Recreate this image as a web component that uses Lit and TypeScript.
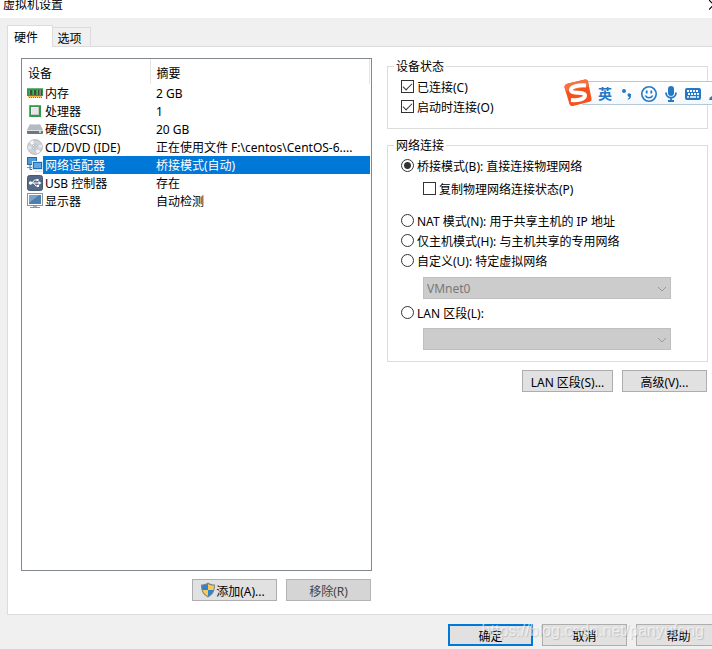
import { LitElement, html, css, svg, type TemplateResult } from "lit";
import { customElement, state } from "lit/decorators.js";
import { classMap } from "lit/directives/class-map.js";

interface Device {
  id: string;
  name: string;
  summary: string;
}

const DEVICES: Device[] = [
  { id: "memory", name: "内存", summary: "2 GB" },
  { id: "cpu", name: "处理器", summary: "1" },
  { id: "disk", name: "硬盘(SCSI)", summary: "20 GB" },
  { id: "cd", name: "CD/DVD (IDE)", summary: "正在使用文件 F:\\centos\\CentOS-6...." },
  { id: "network", name: "网络适配器", summary: "桥接模式(自动)" },
  { id: "usb", name: "USB 控制器", summary: "存在" },
  { id: "display", name: "显示器", summary: "自动检测" },
];

const ICONS: Record<string, TemplateResult> = {
  memory: svg`
    <path d="M0 3h16v8h-1v2H1v-2H0z" fill="#2f9a4a"/>
    <rect x="0" y="3" width="16" height="1" fill="#5fb873"/>
    <path d="M2 5h3v5H2zM6 5h3v5H6zM10 5h2v5h-2zM13 5h2v5h-2z" fill="#4a4640"/>
    <path d="M2 5h1v5H2zM6 5h1v5H6zM10 5h1v5h-1zM13 5h1v5h-1z" fill="#8b8880"/>
    <path d="M1 11h14v1H1z" fill="#f5b94c"/><path d="M1 12.500h14" stroke="#f9d58c" stroke-dasharray="1 1"/>`,
  cpu: svg`
    <rect x="2" y="2" width="12" height="12" fill="#2f9a4a"/>
    <path d="M2 2h12v1H3v11H2z" fill="#55b56d"/>
    <rect x="4" y="4" width="8" height="8" rx="1" fill="#e6e6e6"/>
    <path d="M4.500 11V4.500H11" fill="none" stroke="#fff"/>
    <path d="M5 11.500h6.500V5" fill="none" stroke="#c4c8c6"/>`,
  disk: svg`
    <path d="M3 3h10l3 6H0z" fill="#b4bac2"/>
    <path d="M3.500 3.500h9" stroke="#d6dade"/>
    <path d="M0 9h16v3q0 1-1 1H1q-1 0-1-1z" fill="#6f7680"/>
    <path d="M0 9.500h16" stroke="#dfe3e6"/><rect x="12" y="10" width="2" height="2" fill="#a5ea94"/>`,
  cd: svg`
    <circle cx="8" cy="8" r="7.400" fill="#cfd3d9" stroke="#a9adb3" stroke-width="0.800"/>
    <path d="M8 8 2.500 3.500A7 7 0 0 1 6 1.300zM8 8l5.500 4.500a7 7 0 0 1-3.500 2.200z" fill="#f4f6f8"/>
    <path d="M8 8l6.500-2.500a7 7 0 0 1 .3 3.500zM8 8 1.500 10.500A7 7 0 0 1 1.200 7z" fill="#e6e9ee"/>
    <circle cx="8" cy="8" r="3" fill="#e9ecf0" stroke="#b0b5bc" stroke-width="0.800"/><circle cx="8" cy="8" r="1.300" fill="#fff" stroke="#8b949c" stroke-width="0.800"/>`,
  network: svg`
    <rect x="0.500" y="0.500" width="9" height="7" fill="#4f9bd6" stroke="#1f6cb0"/>
    <path d="M3 8v4.500h4" fill="none" stroke="#1f6cb0"/>
    <path d="M0 10.500h6" stroke="#4f9bd6"/>
    <rect x="5.500" y="4.500" width="10" height="8" fill="#5ea9e0" stroke="#cfe6f7"/>
    <rect x="6.500" y="5.500" width="8" height="6" fill="#5ea9e0" stroke="#1f6cb0"/>
    <path d="M8 14.500h7" stroke="#cfe6f7"/>`,
  usb: svg`
    <rect x="0.500" y="0.500" width="15" height="15" rx="2" fill="#536a86" stroke="#465a73"/>
    <path d="M3 8h9M5 8l2.500-3H10M6.500 8 9 11h1.500" fill="none" stroke="#fff"/>
    <circle cx="3.500" cy="8" r="1.700" fill="#fff"/><path d="M11.500 6 14.500 8l-3 2zM9.500 4h2v2h-2zM10 10h2v2h-2z" fill="#fff"/>`,
  display: svg`
    <rect x="0.500" y="0.500" width="15" height="12" fill="#fff" stroke="#8593a1"/>
    <rect x="2" y="2" width="12" height="9" fill="#4d7fae"/>
    <path d="M2 2h10L2 10z" fill="#7ba3c8"/>
    <path d="M6 13h4v1H6z" fill="#a2adb8"/><path d="M3 14.500h10" stroke="#8593a1"/>`,
};

@customElement("app-root")
export class AppRoot extends LitElement {
  @state() private selected = "network";
  @state() private mode = "bridge";

  static styles = css`
    :host {
      display: flex;
      flex-direction: column;
      min-height: 100vh;
      overflow: hidden;
      position: relative;
      background: #f0f0f0;
      color: #000;
      font: 12px/18px "Noto Sans", "Noto Sans CJK SC", sans-serif;
    }
    * { box-sizing: border-box; }
    svg { display: block; flex: none; }

    .titlebar {
      display: flex;
      justify-content: space-between;
      height: 18px;
      padding-left: 3px;
      background: #fff;
    }
    .title { margin: 0; font-size: 12px; font-weight: 400; line-height: 10px; }
    .close {
      width: 3px;
      height: 10px;
      padding: 0;
      border: 0;
      background: none;
      overflow: hidden;
    }

    .tabs { display: flex; align-items: flex-end; height: 28px; padding-left: 7px; }
    .tab {
      height: 19px;
      width: 38px;
      padding: 2px 4px 0 0;
      border: 1px solid #dcdcdc;
      border-left: 0;
      border-bottom: 0;
      background: #f0f0f0;
      font: inherit;
      color: inherit;
    }
    .tab.active {
      position: relative;
      z-index: 1;
      width: 46px;
      height: 22px;
      margin-bottom: -1px;
      padding: 2px 8px 0 0;
      border-left: 1px solid #dcdcdc;
      background: #fff;
    }

    .panel {
      flex: 1;
      display: grid;
      grid-template-columns: minmax(0, 351fr) minmax(0, 321fr);
      gap: 15px;
      margin-left: 7px;
      padding: 11px 4px 13px 13px;
      border: 1px solid #dcdcdc;
      border-right: 0;
      background: #fff;
    }
    .left { display: flex; flex-direction: column; }
    .list { flex: 1; border: 1px solid #828790; padding-right: 1px; }
    table { width: 100%; border-collapse: collapse; table-layout: fixed; }
    th, td { padding: 0; text-align: left; font-weight: 400; white-space: nowrap; }
    thead tr { height: 25px; }
    th { padding: 5px 6px 0; border-right: 1px solid #e5e5e5; }
    .col-name { width: 128px; }
    tbody tr { height: 18px; line-height: 16px; }
    .device { display: flex; align-items: center; padding-left: 5px; }
    .name { flex: 1; height: 18px; padding: 2px 0 0 2px; }
    .summary { padding: 2px 0 0 6px; overflow: hidden; }
    .selected .name, .selected .summary { background: #0078d7; color: #fff; }

    .actions { display: flex; justify-content: flex-end; gap: 9px; padding: 8px 1px 0 0; }
    .btn {
      display: flex;
      align-items: center;
      justify-content: center;
      width: 85px;
      height: 22px;
      padding: 3px 0 0;
      border: 1px solid #adadad;
      background: #e1e1e1;
      font: inherit;
      color: #000;
      white-space: nowrap;
    }
    .btn svg { margin: -3px 0 0 -4px; }
    .btn.wide { width: 91px; }
    .btn:disabled { background: #d5d5d5; border-color: #b4b4b4; color: #444; }
    .btn.primary { border: 2px solid #0078d7; }

    fieldset {
      min-width: 0;
      margin: 0 0 8px;
      padding: 2px 13px 12px;
      border: 1px solid #dcdcdc;
    }
    .network { margin-bottom: 0; padding-bottom: 11px; }
    legend { height: 16px; margin-left: -7px; padding: 0 2px; line-height: 18px; }
    .row { display: flex; align-items: center; gap: 3px; height: 20px; white-space: nowrap; }
    .row span { padding-top: 4px; }
    .row.nested { margin: 3px 0 12px 22px; }
    .row.spaced { margin-top: 3px; }
    input {
      appearance: none;
      flex: none;
      width: 13px;
      height: 13px;
      margin: 0;
      border: 1px solid #333;
      background: #fff;
    }
    input[type="radio"] { border-radius: 50%; }
    input[type="radio"]:checked {
      background: radial-gradient(circle, #333 0 3px, #fff 4px);
    }
    input[type="checkbox"]:checked::after {
      content: "";
      display: block;
      width: 8px;
      height: 4px;
      margin: 2px 0 0 1px;
      border: solid #333;
      border-width: 0 0 1px 1px;
      transform: rotate(-45deg);
    }
    .combo { position: relative; display: flex; margin: 7px 23px 0 22px; }
    .spaced + .combo { margin-top: 6px; }
    select {
      appearance: none;
      width: 100%;
      height: 22px;
      padding: 1px 3px 0;
      border: 1px solid #bfbfbf;
      border-radius: 0;
      background: #ccc;
      font: inherit;
      color: #787878;
      opacity: 1;
    }
    .arrow { position: absolute; right: 4px; top: 9px; pointer-events: none; }

    .footer { display: flex; justify-content: flex-end; gap: 9px; height: 34px; padding-top: 9px; margin-right: -9px; }
    .watermark {
      position: absolute;
      right: 8px;
      bottom: 8px;
      font: 16px/20px "Liberation Sans", sans-serif;
      color: rgba(255, 255, 255, 0.6);
      text-shadow: 1px 1px 1px rgba(0, 0, 0, 0.15);
      pointer-events: none;
    }

    .ime { position: absolute; right: 0; top: 79px; display: flex; align-items: center; height: 28px; }
    .ime-bar {
      display: flex;
      align-items: center;
      gap: 8px;
      height: 24px;
      margin-left: -10px;
      padding-left: 16px;
      border: solid #b4c8d8;
      border-width: 1px 0;
      background: linear-gradient(#fff, #f5f8fb);
      color: #2478c6;
    }
    .ime-bar svg { margin-top: 2px; }
    .ime-logo { position: relative; z-index: 1; }
    .lang { font: 700 14px/22px "Noto Sans CJK SC", sans-serif; }
  `;

  private radio(value: string, text: string, extra = "") {
    return html`<label class="row ${extra}">
      <input type="radio" name="mode" .checked=${this.mode === value} @change=${() => (this.mode = value)} />
      <span>${text}</span>
    </label>`;
  }

  private combo(label: string, value: string) {
    return html`<div class="combo">
      <select aria-label=${label} disabled><option>${value}</option></select>
      <svg class="arrow" width="10" height="6" viewBox="0 0 10 6"><path d="M1 1l4 4 4-4" fill="none" stroke="#999"/></svg>
    </div>`;
  }

  private ime() {
    return html`<div class="ime">
      <svg class="ime-logo" width="28" height="28" viewBox="0 0 28 28">
        <path d="M4 4.500 21 .6q2.500-.5 3 2l3.500 17q.5 2.500-2 3.200L9 27q-3 .6-3.600-2L.6 8.500Q0 5.500 4 4.500z" fill="#f4511e"/>
        <path d="M4 4.500 21 .6q2.500-.5 3 2l1 5L1.500 12.500.6 8.500Q0 5.500 4 4.500z" fill="#f9703f"/>
        <path d="M22 6.500C16 6 7 7 7 11c0 4.500 14 1 14 5.500 0 4-8 5-14 4.500" fill="none" stroke="#fff" stroke-width="4"/>
      </svg>
      <div class="ime-bar">
        <span class="lang">英</span>
        <svg width="13" height="16" viewBox="0 0 13 16" fill="#2478c6"><circle cx="4" cy="5" r="2"/><path d="M7.500 8.500a1.900 1.900 0 1 1 3.500 1.500c0 2-1.300 3.500-3.200 3.800v-1.300c1-.3 1.500-.9 1.500-1.600-1 0-1.800-1-1.800-2.400z"/></svg>
        <svg width="16" height="16" viewBox="0 0 16 16" fill="none" stroke="#2478c6" stroke-width="1.600"><circle cx="8" cy="8" r="7.200"/><path d="M4.300 9.500c1.400 3 6 3 7.400 0"/><path d="M5.700 4.500v3M10.300 4.500v3" stroke-width="1.800"/></svg>
        <svg width="12" height="16" viewBox="0 0 12 16"><rect x="3" y="0" width="6" height="10" rx="3" fill="#2478c6"/><path d="M1 6.500c0 7 10 7 10 0M6 12v3M3 15h6" fill="none" stroke="#2478c6" stroke-width="1.800"/></svg>
        <svg width="16" height="12" viewBox="0 0 16 12"><path fill-rule="evenodd" d="M2 0h12q2 0 2 2v8q0 2-2 2H2q-2 0-2-2V2q0-2 2-2zM1.500 1.500v9h13v-9z" fill="#2478c6"/><rect x="1" y="1" width="14" height="10" fill="#2478c6"/><path d="M2 3h12M3 6h11" stroke="#fff" stroke-width="1.800" stroke-dasharray="2 1"/><path d="M2 9h2M5 9h6M12 9h2" stroke="#fff" stroke-width="1.600"/></svg>
        <svg width="3" height="16" viewBox="0 0 3 16"><path d="M0 14l1-2.500 2-1.500v4z" fill="#2478c6"/></svg>
      </div>
    </div>`;
  }

  render() {
    return html`
      <header class="titlebar">
        <h1 class="title">虚拟机设置</h1>
        <button class="close" aria-label="关闭">
          <svg width="10" height="10" viewBox="0 0 10 10"><path d="M0 0l9 9M0 9.500l9-9" stroke="#000" stroke-width="1.200"/></svg>
        </button>
      </header>

      <div class="tabs" role="tablist">
        <button class="tab active" role="tab" aria-selected="true">硬件</button>
        <button class="tab" role="tab" aria-selected="false">选项</button>
      </div>

      <main class="panel">
        <section class="left">
          <div class="list">
            <table>
              <thead><tr><th class="col-name">设备</th><th>摘要</th></tr></thead>
              <tbody>
                ${DEVICES.map(
                  (d) => html`<tr class=${classMap({ selected: d.id === this.selected })} @click=${() => (this.selected = d.id)}>
                    <td><div class="device">
                      <svg width="16" height="16" viewBox="0 0 16 16">${ICONS[d.id]}</svg>
                      <span class="name">${d.name}</span>
                    </div></td>
                    <td class="summary">${d.summary}</td>
                  </tr>`
                )}
              </tbody>
            </table>
          </div>
          <div class="actions">
            <button class="btn">
              <svg width="16" height="16" viewBox="0 0 16 16">
                <path d="M8 .5c2 1.500 4.500 2 7 2 0 6-1.500 10-7 13C2.500 12.500 1 8.500 1 2.500c2.500 0 5-.5 7-2z" fill="#77838c"/>
                <path d="M8 2v6H2.600C2.200 6.500 2 5 2 3.600 4.500 3.500 6.500 3 8 2z" fill="#2f82cf"/>
                <path d="M8 2v6h5.400c.4-1.500.6-3 .6-4.400C11.500 3.500 9.500 3 8 2z" fill="#fbc94f"/>
                <path d="M8 8v6.300C5.300 12.800 3.500 11 2.600 8z" fill="#fbc94f"/>
                <path d="M8 8v6.300c2.700-1.500 4.500-3.300 5.400-6.300z" fill="#2f82cf"/>
              </svg>
              <span>添加(A)...</span>
            </button>
            <button class="btn" disabled>移除(R)</button>
          </div>
        </section>

        <section>
          <fieldset>
            <legend>设备状态</legend>
            <label class="row"><input type="checkbox" checked /><span>已连接(C)</span></label>
            <label class="row"><input type="checkbox" checked /><span>启动时连接(O)</span></label>
          </fieldset>
          <fieldset class="network">
            <legend>网络连接</legend>
            ${this.radio("bridge", "桥接模式(B): 直接连接物理网络")}
            <label class="row nested"><input type="checkbox" /><span>复制物理网络连接状态(P)</span></label>
            ${this.radio("nat", "NAT 模式(N): 用于共享主机的 IP 地址")}
            ${this.radio("host", "仅主机模式(H): 与主机共享的专用网络")}
            ${this.radio("custom", "自定义(U): 特定虚拟网络")}
            ${this.combo("特定虚拟网络", "VMnet0")}
            ${this.radio("lan", "LAN 区段(L):", "spaced")}
            ${this.combo("LAN 区段", "")}
          </fieldset>
          <div class="actions">
            <button class="btn wide">LAN 区段(S)...</button>
            <button class="btn">高级(V)...</button>
          </div>
        </section>
      </main>

      <footer class="footer">
        <button class="btn primary">确定</button>
        <button class="btn">取消</button>
        <button class="btn">帮助</button>
      </footer>
      ${this.ime()}
      <div class="watermark">https://blog.csdn.net/panyufeng</div>
    `;
  }
}
